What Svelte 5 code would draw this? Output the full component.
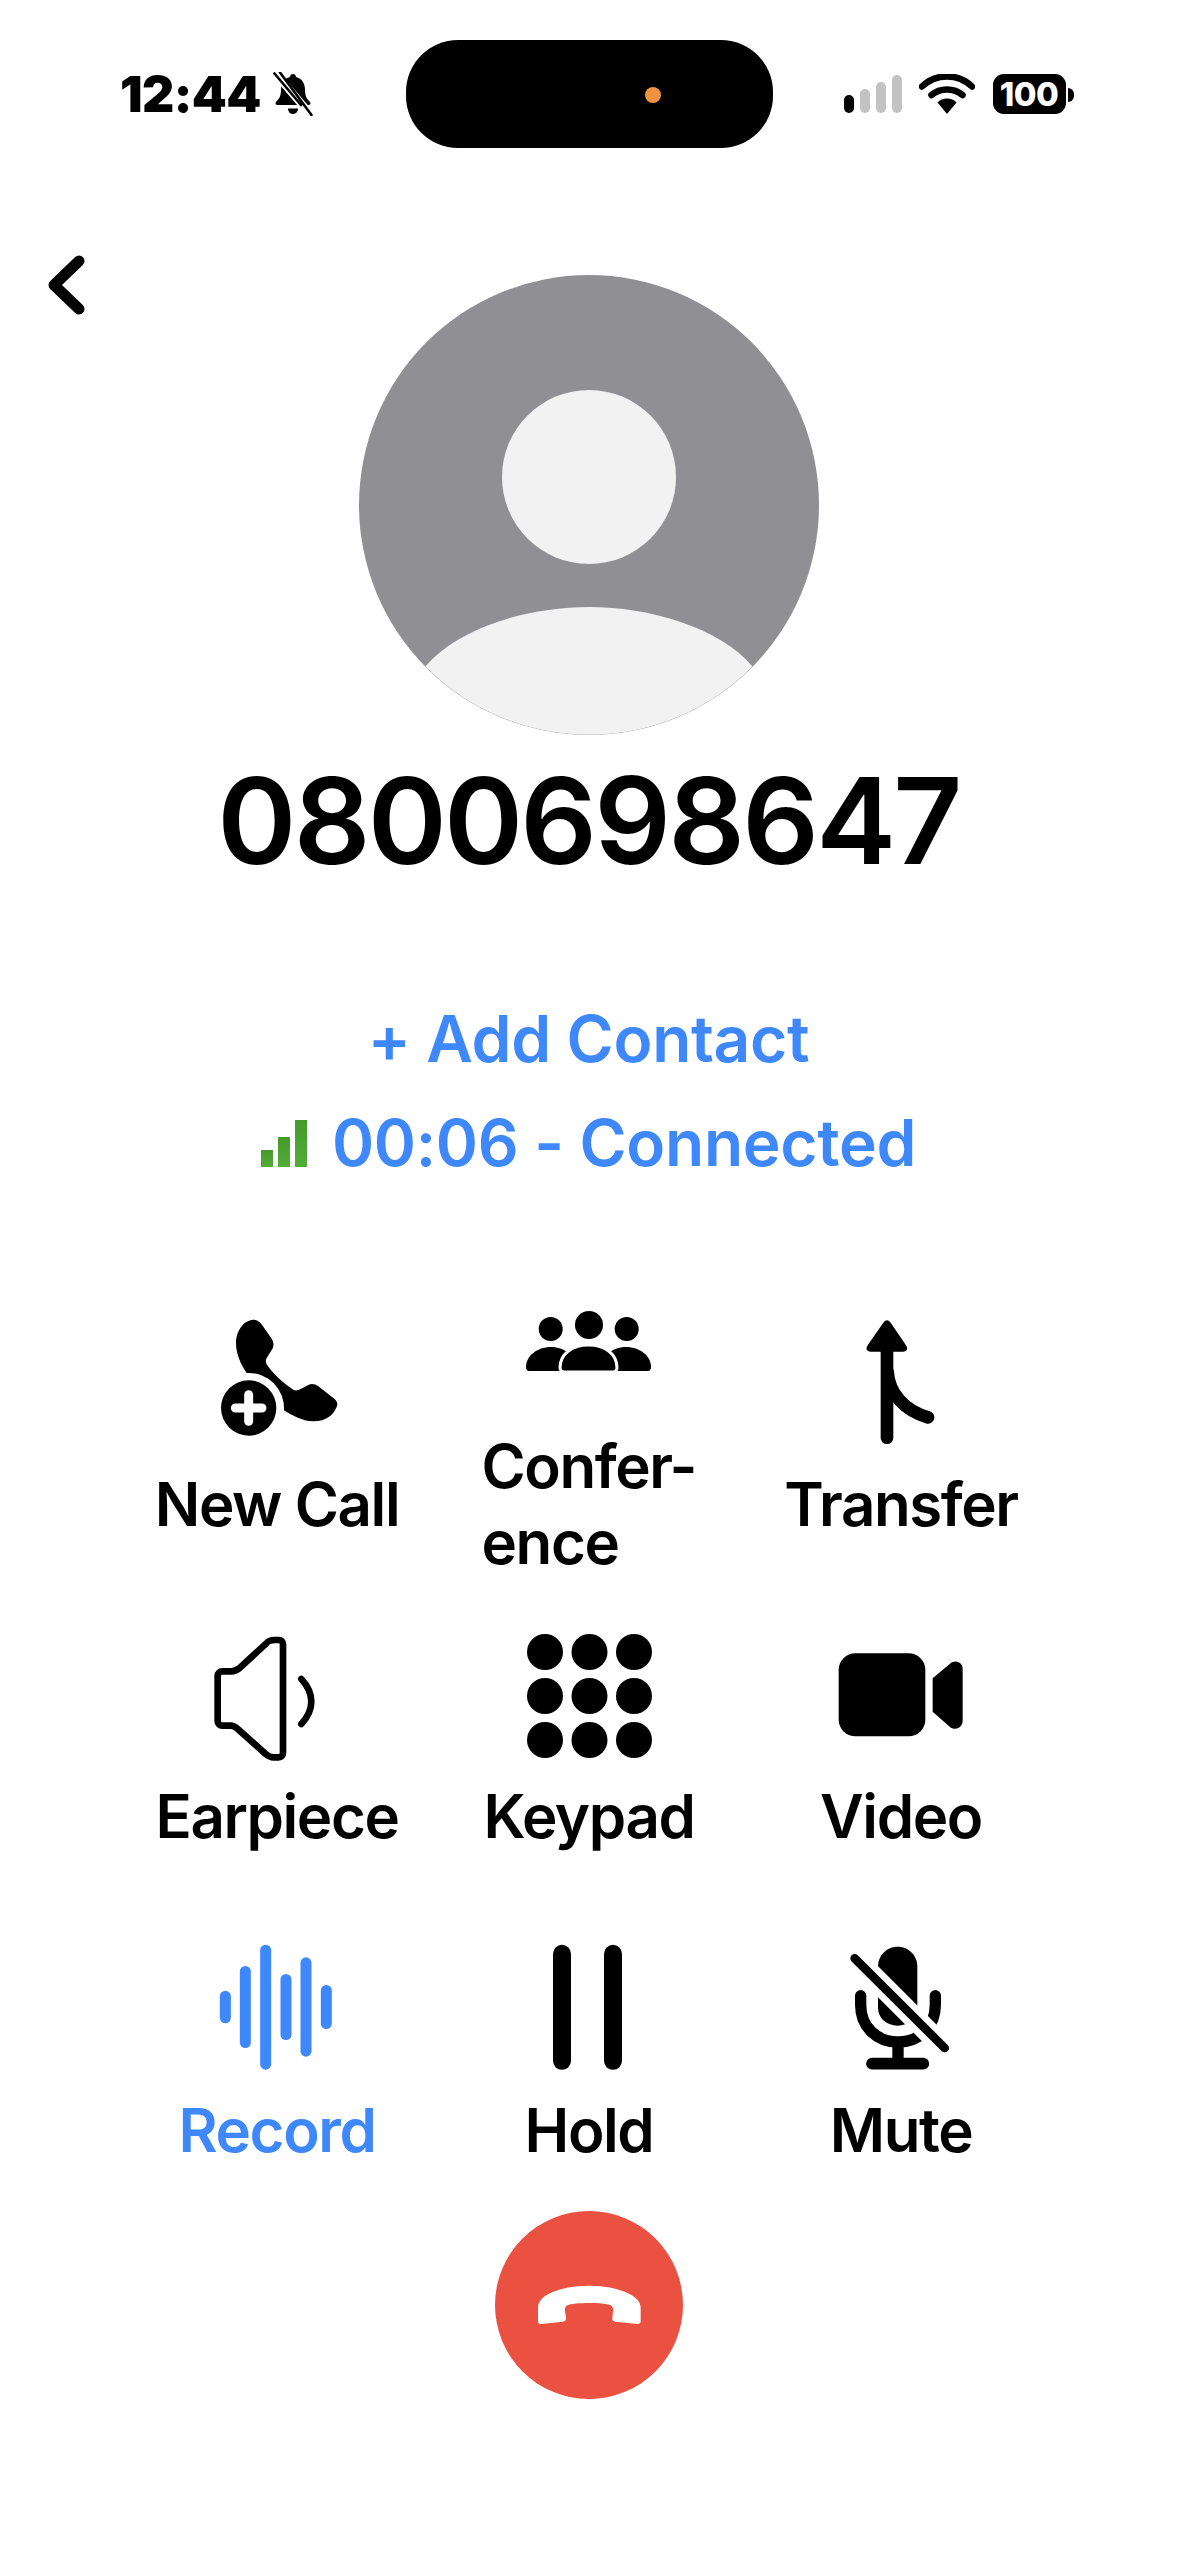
<script>
  const bars = [[285,210,308],[345,136,382],[406,72,447],[467,160,358],[527,110,408],[588,193,325]];
  const dots = [];
  for (const y of [18, 62, 106]) for (const x of [18, 62.5, 107]) dots.push([x, y]);
</script>

<div class="phone">
  <header class="status">
    <div class="left">
      <span class="time">12:44</span>
      <svg class="bell" viewBox="0 0 40 44" width="40" height="44">
        <path d="M20 2c2 0 3 1.500 3 3 6 1.500 9 6.500 9 13 0 6 2 9 5 12 1 1 .5 3-1.500 3H4.500C2.500 33 2 31 3 30c3-3 5-6 5-12 0-6.500 3-11.500 9-13 0-1.500 1-3 3-3z" fill="#000"/>
        <path d="M15 36.500h10c0 3-2 5.500-5 5.500s-5-2.500-5-5.500z" fill="#000"/>
        <path d="M3 2 L37 42" stroke="#fff" stroke-width="8"/>
        <path d="M1.500 1.500 L28 33 M7 .5 L38.500 43" stroke="#000" stroke-width="2.600" stroke-linecap="round"/>
      </svg>
    </div>
    <div class="island"><span class="cam"></span></div>
    <div class="right">
      <div class="signal">
        <i class="on h18"></i><i class="h24"></i><i class="h31"></i><i class="h38"></i>
      </div>
      <svg class="wifi" viewBox="0 0 56 40" width="56" height="40">
        <path d="M3 12.500C17-1 39-1 53 12.500" fill="none" stroke="#000" stroke-width="6.500" stroke-linecap="round"/>
        <path d="M12.500 21C21 13.500 35 13.500 43.500 21" fill="none" stroke="#000" stroke-width="6.500" stroke-linecap="round"/>
        <path d="M28 40l-9.500-11.500C23 23 33 23 37.500 28.500z" fill="#000"/>
      </svg>
      <div class="battery"><span class="pct">100</span><span class="nub"></span></div>
    </div>
  </header>

  <button class="back" aria-label="Back">
    <svg viewBox="0 0 38 60" width="38" height="60">
      <path d="M32 6 L7 30 L32 54" fill="none" stroke="#000" stroke-width="11" stroke-linecap="round" stroke-linejoin="round"/>
    </svg>
  </button>

  <section class="contact">
    <svg class="avatar" viewBox="0 0 460 460" width="460" height="460">
      <circle cx="230" cy="230" r="230" fill="#908f94"/>
      <circle cx="230" cy="202" r="87" fill="#f2f2f2"/>
      <path d="M66.500 391.500C100 352 170 332 230 332C290 332 360 352 393.500 391.500A230 230 0 0 1 66.500 391.500Z" fill="#f2f2f2"/>
    </svg>
    <h1 class="number">0800698647</h1>
    <div class="add">+ Add Contact</div>
    <div class="state">
      <span class="quality"><i class="q1"></i><i class="q2"></i><i class="q3"></i></span>
      <span>00:06 - Connected</span>
    </div>
  </section>

  <section class="grid">
    <div class="cell r1">
      <div class="ic">
        <svg viewBox="270 85 360 360" width="120" height="120" class="i-newcall">
          <path d="M370 90C383 90 392 100 398 108L425 147C432 158 432 170 427 178L410 205C405 214 408 222 414 230C435 258 462 282 490 300C497 304 505 302 512 298L535 286C545 281 555 283 565 290L610 325C620 332 625 342 620 352C610 375 590 395 550 395C520 395 490 380 462 362A106 106 0 0 0 350 250C330 220 318 190 318 160C318 125 340 92 370 90Z" fill="#000"/>
          <circle cx="356" cy="355" r="83" fill="#000"/>
          <path d="M316 355H396M356 315V395" stroke="#fff" stroke-width="27" stroke-linecap="round"/>
        </svg>
      </div>
      <span class="label">New Call</span>
    </div>
    <div class="cell r1">
      <div class="ic conf">
        <svg viewBox="520 1310 136 66" width="136" height="66" class="i-conf">
          <circle cx="550.700" cy="1329" r="12"/>
          <circle cx="626.700" cy="1329" r="12"/>
          <circle cx="589" cy="1325" r="14"/>
          <path d="M526 1367C526 1356 537 1347 551 1347C565 1347 576 1356 576 1371H529C527 1371 526 1369 526 1367Z"/>
          <path d="M651 1367C651 1356 640 1347 626 1347C612 1347 601 1356 601 1371H648C650 1371 651 1369 651 1367Z"/>
          <path d="M560 1368C560 1354 572 1345 588.500 1345C605 1345 617 1354 617 1368C617 1370 615 1372 613 1372H564C562 1372 560 1370 560 1368Z" stroke="#fff" stroke-width="3"/>
        </svg>
      </div>
      <span class="label wrap">Confer-<br />ence</span>
    </div>
    <div class="cell r1">
      <div class="ic">
        <svg viewBox="850 80 230 390" width="76.670" height="130" class="i-transfer">
          <path d="M922 175V442" stroke="#000" stroke-width="38" stroke-linecap="round" fill="none"/>
          <path d="M924 245C928 310 975 360 1045 381" stroke="#000" stroke-width="38" stroke-linecap="round" fill="none"/>
          <path d="M912 96C918 88 926 88 932 96L979 165C986 175 982 184 970 184H873C861 184 857 175 864 165Z" fill="#000"/>
        </svg>
      </div>
      <span class="label">Transfer</span>
    </div>

    <div class="cell r2">
      <div class="ic">
        <svg viewBox="250 75 310 385" width="103.330" height="128.330" class="i-ear">
          <path d="M278 184H305C315 184 322 180 330 174L410 100C415 93 425 90 435 90H448C455 90 460 96 460 103V428C460 436 455 442 447 442H432C422 442 415 438 408 432L330 362C322 355 315 347 303 347H278C270 347 264 341 264 333V197C264 190 270 184 278 184Z" fill="none" stroke="#000" stroke-width="20"/>
          <path d="M515 207C555 250 555 300 515 342" fill="none" stroke="#000" stroke-width="20" stroke-linecap="round"/>
        </svg>
      </div>
      <span class="label">Earpiece</span>
    </div>
    <div class="cell r2">
      <div class="ic">
        <svg viewBox="0 0 125 124" width="125" height="124">
          {#each dots as [x, y]}
            <circle cx={x} cy={y} r="18" fill="#000" />
          {/each}
        </svg>
      </div>
      <span class="label">Keypad</span>
    </div>
    <div class="cell r2">
      <div class="ic">
        <svg viewBox="770 70 385 385" width="128.330" height="128.330">
          <rect x="775" y="128" width="260" height="249" rx="50" fill="#000"/>
          <path d="M1057 203L1108 160C1125 145 1147 155 1147 175V330C1147 350 1125 362 1108 348L1057 303Z" fill="#000"/>
        </svg>
      </div>
      <span class="label">Video</span>
    </div>

    <div class="cell r3 blue">
      <div class="ic tall">
        <svg viewBox="260 70 355 380" width="118.330" height="126.670" class="i-rec">
          {#each bars as [x, a, b]}
            <rect x={x - 16.5} y={a} width="33" height={b - a} rx="16.500" fill="#3e88fb" />
          {/each}
        </svg>
      </div>
      <span class="label">Record</span>
    </div>
    <div class="cell r3">
      <div class="ic tall">
        <svg viewBox="0 0 69 125" width="69" height="126.670" class="i-hold">
          <rect x="0" y="0" width="18" height="125" rx="9" fill="#000"/>
          <rect x="51" y="0" width="18" height="125" rx="9" fill="#000"/>
        </svg>
      </div>
      <span class="label">Hold</span>
    </div>
    <div class="cell r3">
      <div class="ic tall">
        <svg viewBox="810 70 310 380" width="103.330" height="126.670">
          <path d="M897 137C897 104 924 78 956 78C988 78 1015 104 1015 137V260C1015 295 988 315 956 315C924 315 897 295 897 260Z" fill="#000"/>
          <path d="M845 225V252C845 320 895 364 957 364C1019 364 1069 320 1069 252V225" fill="none" stroke="#000" stroke-width="34" stroke-linecap="round"/>
          <path d="M957 364V425" stroke="#000" stroke-width="34"/>
          <path d="M879 429H1033" stroke="#000" stroke-width="35" stroke-linecap="round"/>
          <path d="M800 86L1124 410" stroke="#fff" stroke-width="66"/>
          <path d="M827 113L1097 382" stroke="#000" stroke-width="26" stroke-linecap="round"/>
        </svg>
      </div>
      <span class="label">Mute</span>
    </div>
  </section>

  <button class="end" aria-label="End call">
    <svg viewBox="250 280 330 130" width="110" height="43.330">
      <path d="M262 355C262 335 275 322 295 312C330 295 375 288 415 288C455 288 500 295 535 312C555 322 570 335 570 355V395C570 402 565 404 560 403L495 396C487 395 484 391 485 385L487 365C488 358 487 352 480 347C460 338 370 338 350 347C343 351 342 358 343 365L346 385C347 391 344 395 336 396L272 403C266 404 262 402 262 395Z" fill="#fff"/>
    </svg>
  </button>
</div>

<style>
  :global(body) { margin: 0; background: #fff; }
  .phone {
    position: relative;
    width: 1177px;
    height: 2560px;
    overflow: hidden;
    background: #fff;
    font-family: Inter, "Liberation Sans", sans-serif;
    color: #000;
  }
  .status {
    display: grid;
    grid-template-columns: 406px 367px 1fr;
    height: 108px;
    padding-top: 40px;
  }
  .left { display: flex; align-items: center; padding-left: 120px; gap: 12px; }
  .time { font-size: 50px; font-weight: 900; letter-spacing: -.6px; line-height: 1; }
  .bell { flex: none; }
  .island { background: #000; border-radius: 52px; position: relative; }
  .cam {
    position: absolute; left: 239px; top: 47px;
    width: 16px; height: 16px; border-radius: 50%; background: #f0933e;
  }
  .right { display: flex; align-items: center; padding-left: 71px; }
  .signal { display: flex; align-items: flex-end; gap: 6.500px; height: 38px; margin-right: 17px; }
  .signal i { display: block; width: 9.500px; border-radius: 5px; background: #c3c3c3; }
  .signal i.on { background: #000; }
  .h18 { height: 18px; } .h24 { height: 24px; } .h31 { height: 31px; } .h38 { height: 38px; }
  .wifi { margin-right: 18px; }
  .battery {
    position: relative; width: 73px; height: 40px; border-radius: 11px; background: #000;
    display: flex; align-items: center; justify-content: center;
  }
  .pct { color: #fff; font-size: 33px; font-weight: 800; line-height: 1; letter-spacing: -.5px; }
  .nub {
    position: absolute; right: -8px; top: 14px; width: 6px; height: 14px;
    background: #000; border-radius: 0 7px 7px 0;
  }
  .back {
    position: absolute; left: 47px; top: 255px;
    padding: 0; border: 0; background: none; display: block; line-height: 0;
  }
  .contact {
    display: flex; flex-direction: column; align-items: center;
    margin-top: 127px;
  }
  .avatar { display: block; }
  .number {
    margin: 16px 0 0; font-size: 120px; font-weight: 600; line-height: 140px;
    letter-spacing: -2.800px;
  }
  .add {
    margin-top: 108px; font-size: 64px; font-weight: 600; color: #3e88fb; line-height: 80px;
    letter-spacing: -.3px;
  }
  .state {
    margin-top: 24px; display: flex; align-items: center; gap: 25px;
    font-size: 64px; font-weight: 600; color: #3e88fb; line-height: 80px;
    letter-spacing: -.3px;
  }
  .quality { display: flex; align-items: flex-end; gap: 5px; height: 48px; }
  .quality i { display: block; width: 12px; background: linear-gradient(#449a2a, #53ad38); }
  .q1 { height: 17px; } .q2 { height: 30px; } .q3 { height: 47px; }
  .grid {
    display: grid; grid-template-columns: repeat(3, 312px); justify-content: center;
    margin-top: 135px; margin-left: 1px;
  }
  .cell { display: flex; flex-direction: column; align-items: center; }
  .r1 { height: 316px; } .r2 { height: 310px; } .r3 { height: 224px; }
  .ic { height: 148px; display: flex; flex-direction: column; align-items: center; flex: none; width: 100%; }
  .r2 .ic { height: 144px; }
  .ic.conf { height: 118px; margin-top: -8px; }
  .cell svg { display: block; flex: none; }
  .i-newcall { margin-left: 6px; }
  .i-conf { margin-right: 2px; }
  .i-transfer { margin-top: -1px; }
  .i-ear { margin-right: 24px; margin-top: 1px; }
  .i-rec { margin-right: 2px; }
  .i-hold { margin-right: 3px; }
  .label { font-size: 60px; font-weight: 600; line-height: 76px; white-space: nowrap; letter-spacing: -1.400px; }
  .wrap { align-self: center; width: 215px; }
  .blue .label { color: #3e88fb; }
  .end {
    position: absolute; left: 494.500px; top: 2211px;
    width: 188px; height: 188px; border-radius: 50%; border: 0; padding: 0;
    background: #eb5140; display: flex; align-items: center; justify-content: center;
  }
  .end svg { display: block; }
</style>
